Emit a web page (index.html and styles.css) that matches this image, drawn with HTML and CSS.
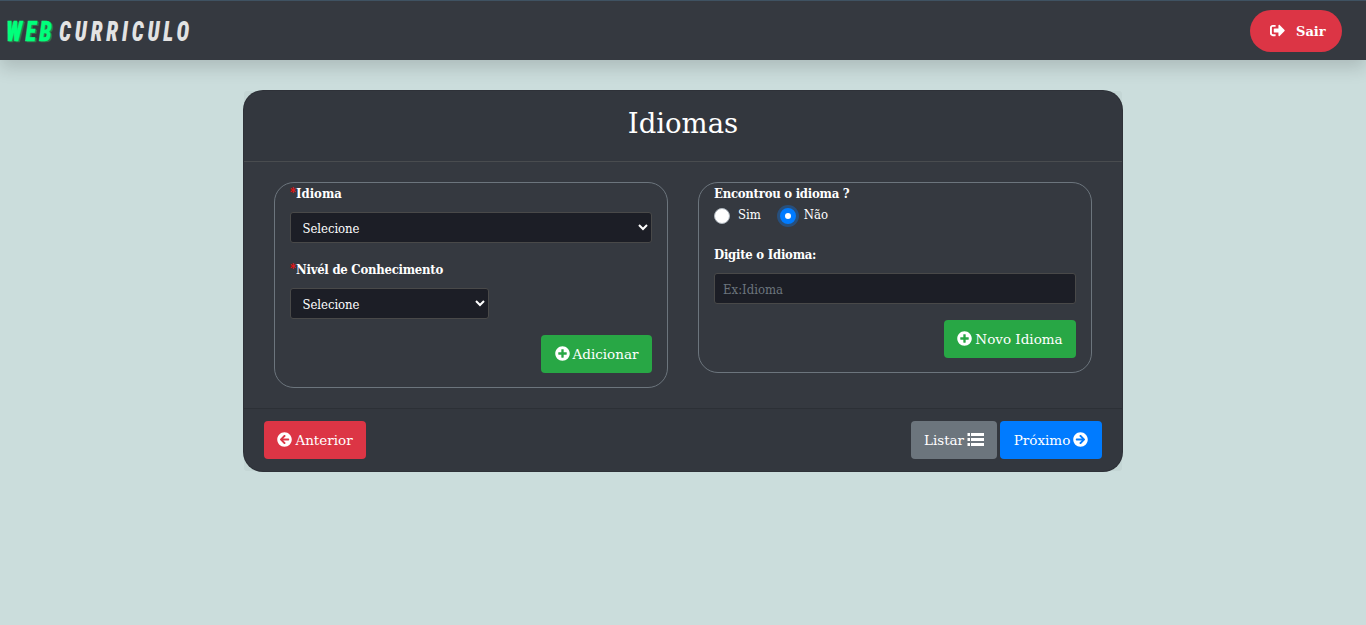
FILE: index.html
```
<!DOCTYPE html>
<html lang="pt-br">
<head>
<meta charset="utf-8">
<title>Web Curriculo</title>
<link rel="stylesheet" href="styles.css">
</head>
<body>
<svg class="sprite" aria-hidden="true">
  <symbol id="plus" viewBox="0 0 512 512"><path d="M256 8C119 8 8 119 8 256s111 248 248 248 248-111 248-248S393 8 256 8zm144 276c0 6.600-5.400 12-12 12h-92v92c0 6.600-5.400 12-12 12h-56c-6.600 0-12-5.400-12-12v-92h-92c-6.600 0-12-5.400-12-12v-56c0-6.600 5.400-12 12-12h92v-92c0-6.600 5.400-12 12-12h56c6.600 0 12 5.400 12 12v92h92c6.600 0 12 5.400 12 12v56z"/></symbol>
  <symbol id="arrow" viewBox="0 0 512 512"><path d="M256 8c137 0 248 111 248 248S393 504 256 504 8 393 8 256 119 8 256 8zm-28.900 143.600l75.500 72.400H120c-13.300 0-24 10.700-24 24v16c0 13.300 10.700 24 24 24h182.600l-75.500 72.400c-9.700 9.300-9.900 24.800-.4 34.300l11 10.900c9.400 9.400 24.600 9.400 33.900 0L404.300 273c9.400-9.400 9.400-24.600 0-33.900L271.600 106.300c-9.400-9.400-24.600-9.400-33.900 0l-11 10.900c-9.500 9.600-9.300 25.100.4 34.400z"/></symbol>
  <symbol id="list" viewBox="0 0 17 13"><path d="M.5 0h2.500v3H.5zM.5 5h2.500v3H.5zM.5 10h2.500v3H.5zM4 0h13v3H4zM4 5h13v3H4zM4 10h13v3H4z"/></symbol>
  <symbol id="exit" viewBox="0 0 512 512"><path d="M497 273L329 441c-15 15-41 4.500-41-17v-96H152c-13.300 0-24-10.700-24-24v-96c0-13.300 10.700-24 24-24h136V88c0-21.400 25.900-32 41-17l168 168c9.300 9.400 9.300 24.600 0 34zM192 436v-40c0-6.600-5.400-12-12-12H96c-17.700 0-32-14.300-32-32V160c0-17.700 14.300-32 32-32h84c6.600 0 12-5.400 12-12V76c0-6.600-5.400-12-12-12H96c-53 0-96 43-96 96v192c0 53 43 96 96 96h84c6.600 0 12-5.400 12-12z"/></symbol>
</svg>
<nav class="topbar">
  <svg class="logo" width="190" height="40" viewBox="0 0 190 40">
    <text class="logo-web-shadow" transform="translate(7.500 30.500) scale(.8 1)" textLength="57" lengthAdjust="spacing">WEB</text>
    <text class="logo-web" transform="translate(6 29.500) scale(.8 1)" textLength="57" lengthAdjust="spacing">WEB</text>
    <text class="logo-name" transform="translate(59 29.500) scale(.77 1)" textLength="169" lengthAdjust="spacing">CURRICULO</text>
  </svg>
  <a class="exit"><svg class="exit-icon"><use href="#exit"/></svg><span class="exit-label">Sair</span></a>
</nav>
<main class="card">
  <header class="card-header"><h1 class="title">Idiomas</h1></header>
  <div class="card-body">
    <section class="panel">
      <label class="label"><span class="req">*</span><span>Idioma</span></label>
      <select class="control"><option>Selecione</option></select>
      <label class="label next"><span class="req">*</span><span class="tight">Nivél de Conhecimento</span></label>
      <select class="control short"><option>Selecione</option></select>
      <div class="actions"><button class="btn green add"><svg class="icon"><use href="#plus"/></svg><span>Adicionar</span></button></div>
    </section>
    <section class="panel">
      <label class="label tight">Encontrou o idioma ?</label>
      <div class="radios">
        <span class="radio"></span><span class="radio-label">Sim</span>
        <span class="radio checked"></span><span class="radio-label">Não</span>
      </div>
      <label class="label typed tight">Digite o Idioma:</label>
      <input class="control field" placeholder="Ex:Idioma">
      <div class="actions"><button class="btn green new"><svg class="icon"><use href="#plus"/></svg><span>Novo Idioma</span></button></div>
    </section>
  </div>
  <footer class="card-footer">
    <button class="btn red"><svg class="icon flip"><use href="#arrow"/></svg><span>Anterior</span></button>
    <div class="pair">
      <button class="btn gray"><span>Listar</span><svg class="icon wide"><use href="#list"/></svg></button>
      <button class="btn blue"><span>Próximo</span><svg class="icon"><use href="#arrow"/></svg></button>
    </div>
  </footer>
</main>
</body>
</html>
```
FILE: styles.css
```
* { box-sizing: border-box; }
body { margin: 0; min-height: 625px; background: #cbdddc; color: #fff; font-family: "DejaVu Serif Condensed", "DejaVu Serif", serif; font-stretch: condensed; font-size: 13px; overflow: hidden; }
.sprite { display: none; }
svg { fill: currentColor; }
.topbar { height: 60px; display: flex; align-items: center; justify-content: space-between; padding: 1px 24px 0 0; background: #353940; border-top: 1px solid #3f5262; box-shadow: 0 8px 16px rgba(0,0,0,.15); }
.logo { font-family: Roboto, sans-serif; font-size: 28px; font-weight: 900; font-style: italic; stroke-width: .4px; }
.logo-web { fill: #00ff7b; stroke: #00ff7b; }
.logo-web-shadow { fill: #33764f; stroke: #33764f; }
.logo-name { fill: #e3e3e3; stroke: none; }
.exit { display: flex; align-items: center; width: 92px; height: 42px; padding-left: 20px; gap: 11px; border-radius: 21px; background: #dc3545; font-family: "DejaVu Serif", serif; font-stretch: normal; font-weight: bold; font-size: 13px; }
.exit-icon { width: 15px; height: 15px; margin-bottom: 2px; }
.card { width: 880px; height: 382px; margin: 30px auto 0; display: flex; flex-direction: column; background: #353940; border: 1px solid rgba(0,0,0,.125); border-radius: 20px; }
.card-header { height: 71px; padding-top: 13px; text-align: center; background: rgba(0,0,0,.03); border-bottom: 1px solid #494c4f; border-radius: 3px 3px 0 0; }
.title { margin: 0; font-family: "DejaVu Serif", serif; font-stretch: normal; font-size: 27.5px; font-weight: normal; line-height: 38px; }
.card-body { flex: 1; display: flex; align-items: flex-start; gap: 30px; padding: 20px 30px; }
.panel { width: 394px; padding: 0 15px 14px; border: 1px solid #6c757d; border-radius: 20px; }
.label { display: flex; height: 21px; margin-bottom: 8px; line-height: 21px; font-weight: bold; white-space: nowrap; }
.tight { letter-spacing: -.25px; }
.req { width: 6px; color: #f01010; font-size: 12px; }
.control { display: block; width: 100%; height: 31px; padding: 5px 8px 4px; border: 1px solid #494949; border-radius: 3px; background: #1c1e26; color: #fff; font: inherit; outline: none; }
select.control { padding: 6px 9px 4px 7.5px; letter-spacing: -.05px; }
.control::placeholder { color: #6c757d; opacity: 1; }
select.short { width: 199px; }
.next { margin-top: 16px; }
.actions { display: flex; justify-content: flex-end; margin-top: 16px; }
.btn { display: flex; align-items: center; justify-content: center; gap: 3px; height: 38px; padding: 0; border: 0; border-radius: 4px; color: #fff; font-family: "DejaVu Serif", serif; font-stretch: normal; font-size: 13.5px; white-space: nowrap; }
.icon { width: 15px; height: 15px; flex: none; margin-bottom: 2px; }
.wide { width: 17px; height: 13px; }
.flip { transform: scaleX(-1); }
.green { background: #28a745; }
.add { width: 111px; }
.new { width: 132px; }
.red { width: 102px; background: #dc3545; }
.gray { width: 86px; background: #6c757d; }
.blue { width: 102px; background: #007bff; }
.radios { display: flex; height: 21px; margin-top: -8px; }
.radio { width: 16px; height: 16px; margin: 4px 8px 0 0; border: 1px solid #adb5bd; border-radius: 50%; background: #fff; }
.checked { margin-left: 19px; border: 5px solid #007bff; box-shadow: 0 0 0 3px #274f7c; }
.radio-label { line-height: 21px; }
.typed { margin-top: 19px; }
.card-footer { height: 63px; display: flex; align-items: center; justify-content: space-between; padding: 0 20px; background: rgba(0,0,0,.03); border-top: 1px solid rgba(0,0,0,.125); border-radius: 0 0 3px 3px; }
.pair { display: flex; gap: 3px; }
```
